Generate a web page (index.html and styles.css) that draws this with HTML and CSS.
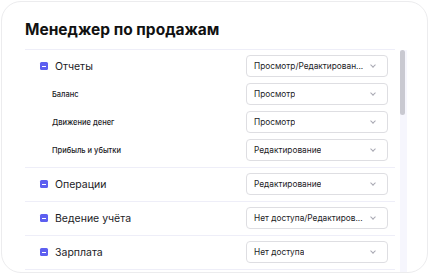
FILE: index.html
```html
<!DOCTYPE html>
<html lang="ru">
<head>
  <meta charset="UTF-8">
  <meta name="viewport" content="width=device-width, initial-scale=1.0">
  <title>Менеджер по продажам</title>
  <link rel="stylesheet" href="styles.css">
</head>
<body>
  <div class="card">
    <h1>Менеджер по продажам</h1>

    <div class="scroll-area">
      <div class="rights-list">
        <!-- group with sub-items -->
        <div class="group">
          <div class="row">
            <span class="toggle"></span>
            <span class="label">Отчеты</span>
            <div class="select"><span class="value">Просмотр/Редактирован...</span><span class="chevron"></span></div>
          </div>
          <div class="row sub">
            <span class="label">Баланс</span>
            <div class="select"><span class="value">Просмотр</span><span class="chevron"></span></div>
          </div>
          <div class="row sub">
            <span class="label">Движение денег</span>
            <div class="select"><span class="value">Просмотр</span><span class="chevron"></span></div>
          </div>
          <div class="row sub">
            <span class="label">Прибыль и убытки</span>
            <div class="select"><span class="value">Редактирование</span><span class="chevron"></span></div>
          </div>
        </div>

        <div class="group">
          <div class="row">
            <span class="toggle"></span>
            <span class="label">Операции</span>
            <div class="select"><span class="value">Редактирование</span><span class="chevron"></span></div>
          </div>
        </div>

        <div class="group">
          <div class="row">
            <span class="toggle"></span>
            <span class="label">Ведение учёта</span>
            <div class="select"><span class="value">Нет доступа/Редактиров...</span><span class="chevron"></span></div>
          </div>
        </div>

        <div class="group">
          <div class="row">
            <span class="toggle"></span>
            <span class="label">Зарплата</span>
            <div class="select"><span class="value">Нет доступа</span><span class="chevron"></span></div>
          </div>
        </div>
      </div>

      <!-- fake scrollbar -->
      <div class="scrollbar">
        <div class="thumb"></div>
      </div>
    </div>
  </div>
</body>
</html>
```

FILE: styles.css
```css
body {
  margin: 0;
  padding: 0;
  background-color: #fff;
  font-family: 'Inter', 'Noto Sans', sans-serif;
  color: #1c1c1f;
}
.card {
  margin: 1px;
  width: 425px;
  height: 270px;
  border: 1px solid #ececee;
  border-radius: 20px;
  overflow: hidden;
  background-color: #fff;
}
h1 {
  margin: 0;
  padding: 18px 0 0 23px;
  height: 29px;
  font-size: 15.5px;
  line-height: 20px;
  font-weight: 700;
  color: #111;
}
.scroll-area {
  display: flex;
  margin-left: 23px;
  height: 230px;
}
.rights-list {
  flex: 1;
  border-top: 1px solid #eeeef8;
}
.group {
  padding: 5px 7px 6px 0;
  border-bottom: 1px solid #eeeef8;
  display: flex;
  flex-direction: column;
  gap: 6px;
}
.row {
  display: flex;
  align-items: center;
  height: 22px;
}
.toggle {
  width: 8px;
  height: 8px;
  margin: 0 7px 0 15px;
  border-radius: 1.5px;
  background-color: #5d5ff0;
  display: flex;
  align-items: center;
  justify-content: center;
}
.toggle::after {
  content: '';
  width: 4px;
  height: 1px;
  background-color: #fff;
}
.label {
  flex: 1;
  font-size: 10.5px;
}
.row.sub .label {
  padding-left: 27px;
  font-size: 7.5px;
  font-weight: 500;
}
.select {
  box-sizing: border-box;
  width: 142px;
  height: 22px;
  padding: 0 0 0 7px;
  border: 1px solid #dedee2;
  border-radius: 4px;
  display: flex;
  align-items: center;
  justify-content: space-between;
}
.value {
  font-size: 8.3px;
  white-space: nowrap;
  overflow: hidden;
}
.chevron {
  flex: none;
  width: 3px;
  height: 3px;
  margin: 0 12px 2px 0;
  border-right: 1px solid #a8a8b2;
  border-bottom: 1px solid #a8a8b2;
  transform: rotate(45deg);
}
.scrollbar {
  width: 7px;
  margin: 1px 20px 0 5px;
  background-color: #f6f6fd;
}
.thumb {
  width: 5px;
  height: 65px;
  border-radius: 3px;
  background-color: #c9c9d1;
}
```
